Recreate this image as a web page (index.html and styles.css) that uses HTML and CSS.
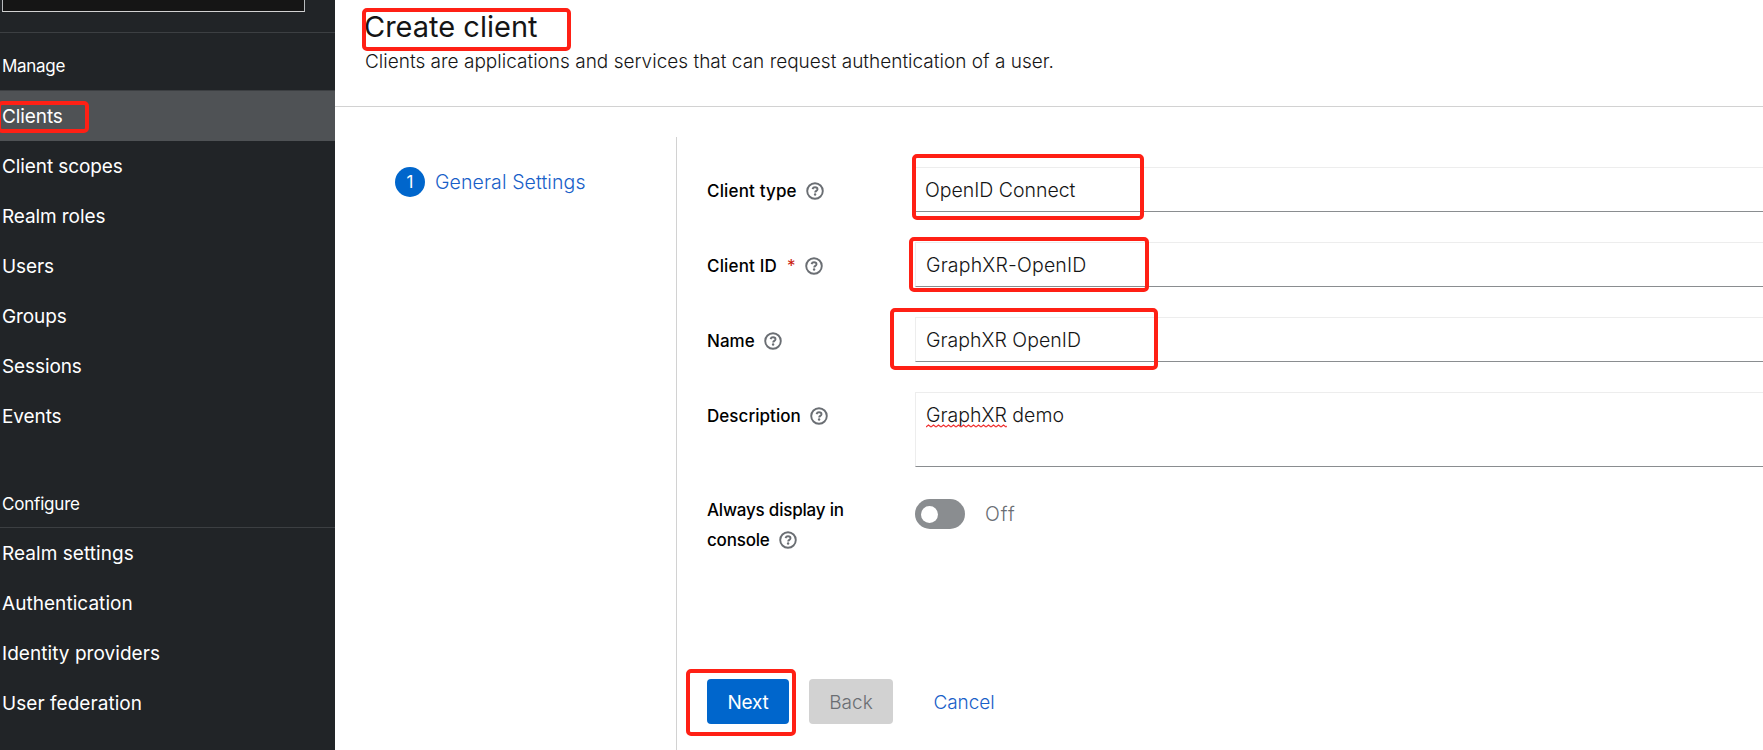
FILE: index.html
```html
<!DOCTYPE html>
<html lang="en">
<head>
<meta charset="utf-8">
<title>Create client</title>
<link rel="stylesheet" href="styles.css">
</head>
<body>
<svg width="0" height="0" class="defs"><symbol id="help" viewBox="0 0 18 18"><circle cx="9" cy="9" r="7.8" fill="none" stroke="#6a6e73" stroke-width="1.9"/><path d="M6.5 7.1C6.9 5.9 7.8 5.3 9 5.3c1.400 0 2.500.8 2.500 1.900 0 1.700-2.300 1.600-2.300 3.200" fill="none" stroke="#6a6e73" stroke-width="1.900"/><circle cx="9.100" cy="12.500" r="1.200" fill="#6a6e73"/></symbol></svg>
<div class="app">
  <aside class="sidebar">
    <div class="realm"><div class="realm-select"></div></div>
    <nav>
      <h2 class="section">Manage</h2>
      <a class="item active">Clients</a>
      <a class="item">Client scopes</a>
      <a class="item">Realm roles</a>
      <a class="item">Users</a>
      <a class="item">Groups</a>
      <a class="item">Sessions</a>
      <a class="item">Events</a>
      <h2 class="section configure">Configure</h2>
      <a class="item loose">Realm settings</a>
      <a class="item loose">Authentication</a>
      <a class="item loose">Identity providers</a>
      <a class="item loose">User federation</a>
    </nav>
  </aside>
  <main class="main">
    <header class="header">
      <h1 class="title">Create client</h1>
      <p class="subtitle">Clients are applications and services that can request authentication of a user.</p>
    </header>
    <div class="wizard">
      <div class="steps"><span class="num">1</span><span class="step">General Settings</span></div>
      <div class="body">
        <form class="form">
          <div class="row"><label class="label">Client type<svg class="help"><use href="#help"/></svg></label><div class="field select">OpenID Connect</div></div>
          <div class="row"><label class="label">Client ID<span class="req">*</span><svg class="help"><use href="#help"/></svg></label><div class="field wide">GraphXR-OpenID</div></div>
          <div class="row"><label class="label name">Name<svg class="help"><use href="#help"/></svg></label><div class="field">GraphXR OpenID</div></div>
          <div class="row"><label class="label name">Description<svg class="help"><use href="#help"/></svg></label><div class="field area"><span class="misspelt">GraphXR<svg class="squiggle"><defs><pattern id="wave" width="5" height="4" patternUnits="userSpaceOnUse"><path d="M0 3L2.500 1L5 3" fill="none" stroke="#f03030" stroke-width="1.200"/></pattern></defs><rect width="100%" height="4" fill="url(#wave)"/></svg></span> demo</div></div>
          <div class="row last"><label class="label two">Always display in<br>console<svg class="help"><use href="#help"/></svg></label><div class="switch"><span class="track"><span class="knob"></span></span><span class="off">Off</span></div></div>
        </form>
        <footer class="footer"><button class="btn primary">Next</button><button class="btn disabled">Back</button><button class="btn link">Cancel</button></footer>
      </div>
    </div>
  </main>
</div>
<div class="mark mark-clients"></div>
<div class="mark mark-title"></div>
<div class="mark mark-type"></div>
<div class="mark mark-id"></div>
<div class="mark mark-name"></div>
<div class="mark mark-next"></div>
</body>
</html>
```
FILE: styles.css
```css
* { box-sizing: border-box; }
body { margin: 0; font-family: Inter, "Liberation Sans", sans-serif; color: #151515; overflow: hidden; background: #fff; }
h1, h2, p { margin: 0; font-weight: 400; }
.defs { position: absolute; }
.app { display: flex; height: 750px; }

.sidebar { width: 335px; flex: none; background: #212427; color: #fff; }
.realm { height: 33px; padding-left: 2px; border-bottom: 1px solid #3c3f42; }
.realm-select { width: 303px; height: 12px; background: #151515; border: 1px solid #b8bbbe; border-top: 0; border-bottom-color: #d2d2d2; }
.section { height: 58px; padding: 20px 0 0 2px; font-size: 17px; line-height: 26px; letter-spacing: -.3px; border-bottom: 1px solid #3c3f42; }
.configure { height: 87px; padding-top: 50px; letter-spacing: -.2px; }
.item { display: block; height: 50px; line-height: 52px; padding-left: 2px; font-size: 19px; letter-spacing: -.1px; }
.loose { letter-spacing: .05px; }
.active { background: #4f5255; }

.main { flex: 1; min-width: 0; }
.header { height: 107px; padding: 5px 0 0 30px; border-bottom: 1px solid #d2d2d2; }
.title { font-size: 29px; line-height: 44px; letter-spacing: 0; margin-left: -1px; }
.subtitle { font-size: 19px; line-height: 25px; font-weight: 300; letter-spacing: .01px; white-space: nowrap; }
.wizard { display: flex; height: 643px; padding-top: 30px; }
.steps { display: flex; width: 341px; flex: none; padding: 30px 0 0 60px; gap: 10px; line-height: 30px; }
.num { width: 30px; height: 30px; border-radius: 50%; background: #06c; color: #fff; font-size: 17px; text-align: center; }
.step { color: #1860c8; font-size: 19.5px; font-weight: 300; letter-spacing: .1px; }
.body { flex: 1; min-width: 0; border-left: 1px solid #d2d2d2; padding: 30px 0 0 30px; display: flex; flex-direction: column; }
.form { display: flex; flex-direction: column; gap: 30px; }
.row { display: flex; }
.label { width: 208px; flex: none; padding-top: 10px; font-size: 17px; line-height: 28px; font-weight: 500; color: #000; letter-spacing: .16px; }
.name { letter-spacing: .04px; }
.help { width: 18px; height: 18px; margin-left: 9.5px; vertical-align: -2.5px; overflow: visible; }
.req { color: #c9190b; font-weight: 400; margin-left: 10px; }
.field { flex: 1; height: 45px; border: 1px solid #ededed; border-right: 0; border-bottom-color: #8a8d90; padding-left: 10px; font-size: 19.5px; line-height: 45px; font-weight: 300; letter-spacing: .02px; white-space: nowrap; }
.select { border-left: 0; letter-spacing: -.02px; }
.wide { letter-spacing: .18px; }
.area { height: 75px; }
.misspelt { position: relative; }
.squiggle { position: absolute; left: 0; bottom: -1px; width: 100%; height: 4px; }
.last { height: 60px; }
.two { padding: 0; line-height: 30px; letter-spacing: -.2px; margin-top: -2px; }
.switch { display: flex; gap: 20px; padding-top: 2px; align-items: flex-start; }
.track { width: 50px; height: 30px; border-radius: 15px; background: #8a8d90; padding: 7px 6px; }
.knob { display: block; width: 17px; height: 17px; border-radius: 50%; background: #fff; }
.off { color: #6a6e73; font-size: 19.5px; font-weight: 300; line-height: 30px; letter-spacing: 1px; }
.footer { display: flex; margin-top: 122px; }
.btn { height: 45px; border: 0; border-radius: 4px; padding: 2px 0 0; font: 400 19px Inter, sans-serif; }
.primary { width: 82px; margin-right: 20px; background: #06c; color: #fff; letter-spacing: -.2px; }
.disabled { width: 84px; background: #d2d2d2; color: #6a6e73; font-weight: 300; margin-right: 21px; }
.link { width: 100px; background: none; color: #1860c8; font-weight: 300; letter-spacing: -.05px; }

.mark { position: absolute; border: 4px solid #ff2015; border-radius: 5px; }
.mark-clients { left: -3px; top: 100.5px; width: 91.5px; height: 32px; }
.mark-title { left: 362px; top: 7.5px; width: 209px; height: 43px; }
.mark-type { left: 912px; top: 154px; width: 232px; height: 66px; }
.mark-id { left: 909px; top: 237px; width: 240px; height: 55px; }
.mark-name { left: 890px; top: 308px; width: 268px; height: 62px; }
.mark-next { left: 686px; top: 669px; width: 110px; height: 67px; }
```
